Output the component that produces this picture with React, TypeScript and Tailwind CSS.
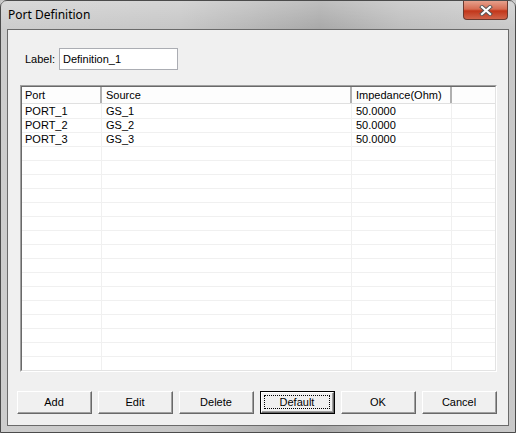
import React from "react";

const rows = [
  ["PORT_1", "GS_1", "50.0000"],
  ["PORT_2", "GS_2", "50.0000"],
  ["PORT_3", "GS_3", "50.0000"],
];

function Btn({ label, def }: { label: string; def?: boolean }) {
  if (def) {
    return (
      <div className="w-[75px] h-[23px] border border-black bg-[#f0f0f0]">
        <div className="w-full h-full border-t border-l border-white border-b border-r border-b-[#696969] border-r-[#696969]">
          <div className="w-full h-full border-b border-r border-[#a0a0a0] flex items-center justify-center p-[2px]">
            <div className="w-full h-full border border-dotted border-black flex items-center justify-center">
              {label}
            </div>
          </div>
        </div>
      </div>
    );
  }
  return (
    <div className="w-[75px] h-[23px] bg-[#f0f0f0] border-t border-l border-white border-b border-r border-b-[#696969] border-r-[#696969]">
      <div className="w-full h-full border-b border-r border-[#a0a0a0] flex items-center justify-center">
        {label}
      </div>
    </div>
  );
}

export default function App() {
  const empty = Array.from({ length: 18 });
  return (
    <div
      className="w-[516px] h-[433px] overflow-hidden bg-[#c4c4c4] text-[11px] text-black"
      style={{ fontFamily: "Tahoma, 'Liberation Sans', Arial, sans-serif" }}
    >
      <div className="relative w-[516px] h-[433px] rounded-t-[7px] border border-[#4b4b4b] bg-[linear-gradient(90deg,#cdcdcd_0%,#c6c6c6_35%,#a9a9a9_62%,#bebebe_78%,#c9c9c9_100%)] flex flex-col">
        {/* Title bar */}
        <div className="h-[28px] flex items-center pl-[7px] text-[12px] text-black bg-[linear-gradient(180deg,rgba(255,255,255,0.25),rgba(255,255,255,0))]" style={{ fontFamily: "'Noto Sans', 'Liberation Sans', sans-serif" }}>
          Port Definition
        </div>
        {/* Close button */}
        <div className="absolute left-[462px] top-[0px] w-[45px] h-[19px] rounded-b-[4px] border border-[#6a3a30] border-t-0 bg-[linear-gradient(180deg,#e6a08c_0%,#d66c52_45%,#c2361a_55%,#d0644a_100%)] flex items-center justify-center">
          <svg width="14" height="11" viewBox="0 0 14 11">
            <path d="M3 2 L11 9 M11 2 L3 9" stroke="#555555" strokeWidth="4" strokeLinecap="square" />
            <path d="M3 2 L11 9 M11 2 L3 9" stroke="#ffffff" strokeWidth="2.2" strokeLinecap="square" />
          </svg>
        </div>
        {/* Client area */}
        <div className="mx-[6px] h-[397px] border border-[#6a6a6a] bg-[#f0f0f0] flex flex-col">
          <div className="flex items-center mt-[18px] pl-[17px]">
            <span className="w-[34px]">Label:</span>
            <div className="w-[119px] h-[22px] border border-[#abadb3] bg-white flex items-center pl-[3px]">
              Definition_1
            </div>
          </div>
          <div className="ml-[12px] mt-[15px] w-[477px] h-[287px] border-t border-l border-[#a0a0a0] border-b border-r border-b-white border-r-white">
            <div className="w-full h-full border-t border-l border-[#696969] border-b border-r border-b-[#e3e3e3] border-r-[#e3e3e3] bg-white overflow-hidden">
              {/* header */}
              <div className="flex h-[17px] bg-[#fdfdfd] border-b border-[#e0e0e0]">
                <div className="w-[80px] pl-[3px] pt-[1px] flex items-center border-r-2 border-[#b0b0b0]">Port</div>
                <div className="w-[250px] pl-[4px] pt-[1px] flex items-center border-r-2 border-[#b0b0b0]">Source</div>
                <div className="w-[100px] pl-[4px] pt-[1px] flex items-center border-r-2 border-[#b0b0b0]">Impedance(Ohm)</div>
                <div className="flex-1" />
              </div>
              {rows.map((r, i) => (
                <div key={i} className={`flex border-b border-[#f0f0f0] ${i === 0 ? "h-[15px]" : "h-[14px]"}`}>
                  <div className="w-[80px] pl-[3px] border-r border-[#f0f0f0] flex items-end pb-[0px] leading-[13px]">{r[0]}</div>
                  <div className="w-[250px] pl-[4px] border-r border-[#f0f0f0] flex items-end leading-[13px]">{r[1]}</div>
                  <div className="w-[100px] pl-[4px] border-r border-[#f0f0f0] flex items-end leading-[13px]">{r[2]}</div>
                  <div className="flex-1" />
                </div>
              ))}
              {empty.map((_, i) => (
                <div key={i} className="flex h-[14px] border-b border-[#f0f0f0]">
                  <div className="w-[80px] border-r border-[#f0f0f0]" />
                  <div className="w-[250px] border-r border-[#f0f0f0]" />
                  <div className="w-[100px] border-r border-[#f0f0f0]" />
                  <div className="flex-1" />
                </div>
              ))}
            </div>
          </div>
          <div className="flex gap-[6px] ml-[9px] mt-[19px]">
            <Btn label="Add" />
            <Btn label="Edit" />
            <Btn label="Delete" />
            <Btn label="Default" def />
            <Btn label="OK" />
            <Btn label="Cancel" />
          </div>
        </div>
      </div>
    </div>
  );
}
